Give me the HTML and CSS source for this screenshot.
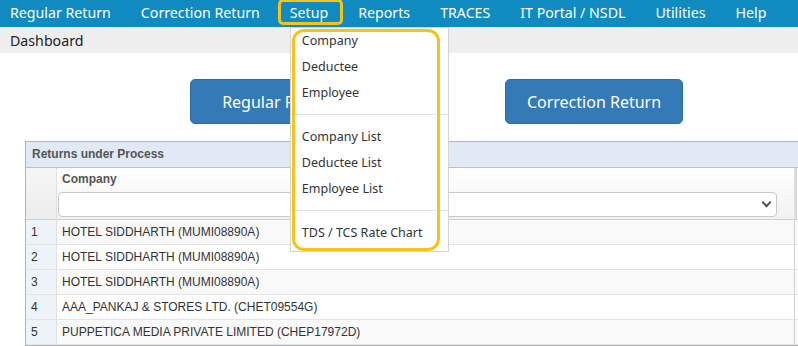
FILE: index.html
```html
<!DOCTYPE html>
<html lang="en">
<head>
    <meta charset="UTF-8">
    <meta name="viewport" content="width=device-width, initial-scale=1.0">
    <title>Dashboard</title>
    <link rel="stylesheet" href="styles.css">
</head>
<body>
    <nav class="topnav">
        <a class="nav-item">Regular Return</a>
        <a class="nav-item">Correction Return</a>
        <div class="nav-item setup">
            Setup
            <div class="menu">
                <a class="menu-item">Company</a>
                <a class="menu-item">Deductee</a>
                <a class="menu-item">Employee</a>
                <hr class="menu-sep">
                <a class="menu-item">Company List</a>
                <a class="menu-item">Deductee List</a>
                <a class="menu-item">Employee List</a>
                <hr class="menu-sep">
                <a class="menu-item">TDS / TCS Rate Chart</a>
            </div>
        </div>
        <a class="nav-item">Reports</a>
        <a class="nav-item">TRACES</a>
        <a class="nav-item">IT Portal / NSDL</a>
        <a class="nav-item">Utilities</a>
        <a class="nav-item">Help</a>
    </nav>

    <div class="crumb">Dashboard</div>

    <div class="actions">
        <button class="btn">Regular Return</button>
        <button class="btn">Correction Return</button>
    </div>

    <section class="panel">
        <div class="panel-title">Returns under Process</div>
        <div class="grid">
            <div class="head num"></div>
            <div class="head">
                <div class="head-label">Company</div>
                <div class="filter"><span class="caret"></span></div>
            </div>
            <div class="head extra"></div>

            <div class="num">1</div><div class="cell">HOTEL SIDDHARTH (MUMI08890A)</div><div class="extra"></div>
            <div class="num">2</div><div class="cell">HOTEL SIDDHARTH (MUMI08890A)</div><div class="extra"></div>
            <div class="num">3</div><div class="cell">HOTEL SIDDHARTH (MUMI08890A)</div><div class="extra"></div>
            <div class="num">4</div><div class="cell">AAA_PANKAJ &amp; STORES LTD. (CHET09554G)</div><div class="extra"></div>
            <div class="num">5</div><div class="cell">PUPPETICA MEDIA PRIVATE LIMITED (CHEP17972D)</div><div class="extra"></div>
        </div>
    </section>
</body>
</html>
```

FILE: styles.css
```css
body {
    margin: 0;
    width: 798px;
    height: 346px;
    overflow: hidden;
    font-family: "Noto Sans", "Open Sans", sans-serif;
    background: white;
}

.topnav {
    display: flex;
    height: 27px;
    background: #0f8bc2;
    padding-left: 10px;
    border-bottom: 1px solid #cdeaf5;
}

.nav-item {
    color: white;
    font-size: 14.2px;
    line-height: 25px;
    margin-right: 30px;
    white-space: nowrap;
}

.setup {
    position: relative;
}

.setup::after {
    content: "";
    position: absolute;
    left: -12px;
    top: -1px;
    width: 59px;
    height: 20px;
    border: 3px solid #f6c21c;
    border-radius: 5px;
}

.menu {
    position: absolute;
    left: 0;
    top: 27px;
    width: 157px;
    padding: 0 0 5px;
    background: white;
    border: 1px solid #d4d4d4;
    z-index: 5;
}

.menu::after {
    content: "";
    position: absolute;
    left: 1px;
    top: 1px;
    width: 142px;
    height: 216px;
    border: 3px solid #f6c21c;
    border-radius: 12px;
}

.menu-item {
    display: block;
    height: 26px;
    line-height: 26px;
    padding-left: 11px;
    font-size: 12.5px;
    color: #333;
}

.menu-sep {
    margin: 8px 0 9px;
    border: 0;
    border-top: 1px solid #e3e3e3;
}

.crumb {
    height: 25px;
    line-height: 25px;
    background: #eeeeee;
    padding-left: 10px;
    font-size: 14.2px;
    color: #222;
}

.actions {
    display: flex;
    gap: 137px;
    padding: 26px 0 0 190px;
}

.btn {
    width: 178px;
    height: 45px;
    border: 1px solid #2e6da4;
    border-radius: 5px;
    background: #337ab7;
    color: white;
    font-family: "Noto Sans", "Open Sans", sans-serif;
    font-size: 16px;
}

.panel {
    margin: 17px 0 0 25px;
    width: 820px;
    border: 1px solid #a9b6c2;
    font-family: "Liberation Sans", Arial, sans-serif;
    font-size: 12px;
}

.panel-title {
    height: 25px;
    line-height: 25px;
    padding-left: 6px;
    background: #e1e9f4;
    border-bottom: 1px solid #b5c0c9;
    color: #555;
    font-weight: bold;
}

.grid {
    display: grid;
    grid-template-columns: 31px 738px 1fr;
    grid-template-rows: 52px;
    grid-auto-rows: 25px;
}

.grid > div {
    border-bottom: 1px solid #e4e4e4;
}

.head {
    background: linear-gradient(#ffffff, #f1f1f1);
    border-bottom: 1px solid #d0d0d0 !important;
    border-right: 1px solid #e0e0e0;
}

.grid .head.num {
    background: linear-gradient(#f6f6f6, #ececec);
}

.head-label {
    padding: 4px 0 0 5px;
    font-weight: bold;
    color: #555;
}

.filter {
    position: relative;
    margin: 6px 17px 0 1px;
    height: 23px;
    background: white;
    border: 1px solid #c8c8c8;
    border-radius: 4px;
}

.caret {
    position: absolute;
    right: 6px;
    top: 6px;
    width: 5px;
    height: 5px;
    border-right: 2px solid #555;
    border-bottom: 2px solid #555;
    transform: rotate(45deg);
}

.head.extra {
    border-left: 2px solid #d8d8d8;
}

.num {
    background: #eef3fa;
    border-right: 1px solid #e0e0e0;
    padding-left: 5px;
    line-height: 25px;
    color: #333;
}

.cell {
    padding-left: 5px;
    line-height: 25px;
    color: #333;
    border-right: 1px solid #d0d0d0;
}

.extra {
    background: white;
}

.grid > div:nth-child(n+4):nth-child(-n+6),
.grid > div:nth-child(n+10):nth-child(-n+12),
.grid > div:nth-child(n+16):nth-child(-n+18) {
    background-color: #f9f9f9;
}

.grid > .num {
    background-color: #eef3fa !important;
}
```
